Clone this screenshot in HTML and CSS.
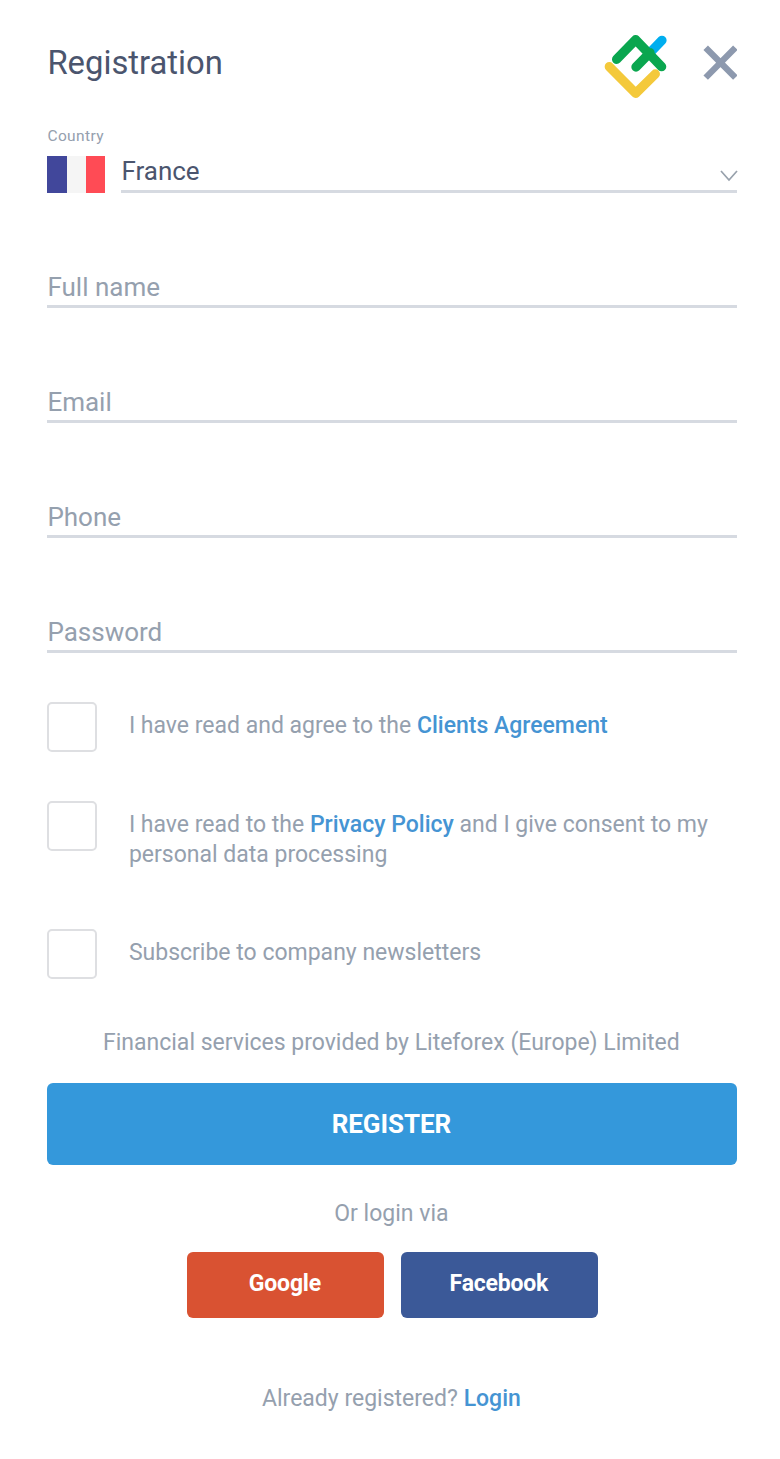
FILE: index.html
```
<!DOCTYPE html>
<html lang="en">
  <head>
    <meta charset="UTF-8">
    <title>Registration</title>
    <link rel="stylesheet" href="styles.css">
  </head>
  <body>
    <form class="registration">
      <div class="header">
        <h1 class="title">Registration</h1>
        <svg class="logo" viewBox="42 42 190 195" fill="none" stroke-width="28" stroke-linecap="round" stroke-linejoin="round">
          <path stroke="#f4c93b" d="M58 140L137 220L196 162"/>
          <path stroke="#00aeef" d="M180 98L216 61"/>
          <path stroke="#0aa64f" d="M80 118L137 59L215 140M138 141L180 98"/>
        </svg>
        <svg class="close" viewBox="340 74 104 106" fill="none" stroke="#8d99ae" stroke-width="19">
          <path d="M348 82L437 172M437 82L348 172"/>
        </svg>
      </div>

      <div class="country">
        <div class="country-label"><span>Country</span></div>
        <div class="country-row">
          <div class="flag"><i class="blue"></i><i class="white"></i><i class="red"></i></div>
          <div class="select">
            <span class="value">France</span>
            <svg class="arrow" viewBox="0 0 20 14" fill="none" stroke="#98a1ac" stroke-width="1.7">
              <path d="M2 2L10 11L18 2"/>
            </svg>
          </div>
        </div>
      </div>

      <div class="field"><span>Full name</span></div>
      <div class="field"><span>Email</span></div>
      <div class="field"><span>Phone</span></div>
      <div class="field"><span>Password</span></div>

      <div class="checks">
        <div class="check">
          <i class="box"></i>
          <p>I have read and agree to the <a href="#">Clients Agreement</a></p>
        </div>
        <div class="check check-tall">
          <i class="box"></i>
          <p>I have read to the <a href="#">Privacy Policy</a> and I give consent to my<br>personal data processing</p>
        </div>
        <div class="check">
          <i class="box"></i>
          <p>Subscribe to company newsletters</p>
        </div>
      </div>

      <p class="provider">Financial services provided by Liteforex (Europe) Limited</p>
      <button type="button" class="register">REGISTER</button>
      <p class="via">Or login via</p>
      <div class="social">
        <button type="button" class="google">Google</button>
        <button type="button" class="facebook">Facebook</button>
      </div>
      <p class="login">Already registered? <a href="#">Login</a></p>
    </form>
  </body>
</html>
```

FILE: styles.css
```
* {
  box-sizing: border-box;
}

body {
  margin: 0;
  background-color: #fff;
  font-family: Roboto, sans-serif;
  font-size: 23px;
  line-height: 29.5px;
  color: #95a0ae;
}

p,
h1 {
  margin: 0;
}

a {
  color: #4594d3;
  font-weight: 500;
  text-decoration: none;
}

.registration {
  width: 780px;
  height: 1459px;
  padding: 34px 42.6px 0 47.4px;
}

.header {
  display: flex;
  align-items: flex-start;
  height: 92px;
}

.title {
  flex: 1;
  padding-top: 9px;
  font-size: 32.8px;
  font-weight: 400;
  line-height: 40px;
  color: #4b556e;
}

.logo {
  width: 63.3px;
  height: 65px;
}

.close {
  width: 34.7px;
  height: 35.3px;
  margin: 10.7px 0 0 35.5px;
}

.country-label {
  height: 29.5px;
  font-size: 15.5px;
  line-height: 20px;
  letter-spacing: 0.4px;
}

.country-row {
  display: flex;
  height: 37.5px;
}

.flag {
  display: flex;
  width: 57.5px;
  margin-right: 16.5px;
}

.flag i {
  flex: 1;
}

.blue {
  background-color: #41479b;
}

.white {
  background-color: #f5f5f5;
}

.red {
  background-color: #ff4b55;
}

.select {
  display: flex;
  flex: 1;
  justify-content: space-between;
  align-items: flex-end;
  border-bottom: 3px solid #d6dae1;
  font-size: 26px;
  line-height: 34px;
  color: #4b556e;
}

.value {
  padding-bottom: 2px;
}

.arrow {
  width: 20px;
  height: 14px;
  margin: 0 -1.5px 7px 0;
}

.field {
  display: flex;
  align-items: flex-end;
  height: 115px;
  padding-bottom: 1px;
  border-bottom: 3px solid #d6dae1;
  font-size: 26px;
  line-height: 34px;
}

.checks {
  padding-top: 49px;
}

.check {
  display: flex;
  height: 99px;
}

.check-tall {
  height: 128px;
}

.box {
  width: 50px;
  height: 50px;
  margin-right: 31.5px;
  border: 2px solid #dedfe2;
  border-radius: 5px;
}

.check p {
  padding-top: 9px;
}

.provider {
  height: 55px;
  padding-right: 2px;
  text-align: center;
}

.register {
  display: block;
  width: 100%;
  height: 82px;
  padding: 0 2px 0 0;
  border: 0;
  border-radius: 6px;
  background-color: #3498db;
  font: 700 26px Roboto, sans-serif;
  letter-spacing: -0.1px;
  color: #fff;
}

.via {
  height: 87px;
  padding: 34px 2px 0 0;
  text-align: center;
}

.social {
  display: flex;
  justify-content: center;
  gap: 17px;
}

.social button {
  width: 197px;
  height: 66px;
  padding: 0 1px 3px 0;
  border: 0;
  border-radius: 6px;
  font: 700 23px Roboto, sans-serif;
  letter-spacing: -0.2px;
  color: #fff;
}

.social .google {
  background-color: #d95232;
}

.social .facebook {
  background-color: #3b5998;
}

.login {
  padding: 66px 2px 0 0;
  text-align: center;
}
```
